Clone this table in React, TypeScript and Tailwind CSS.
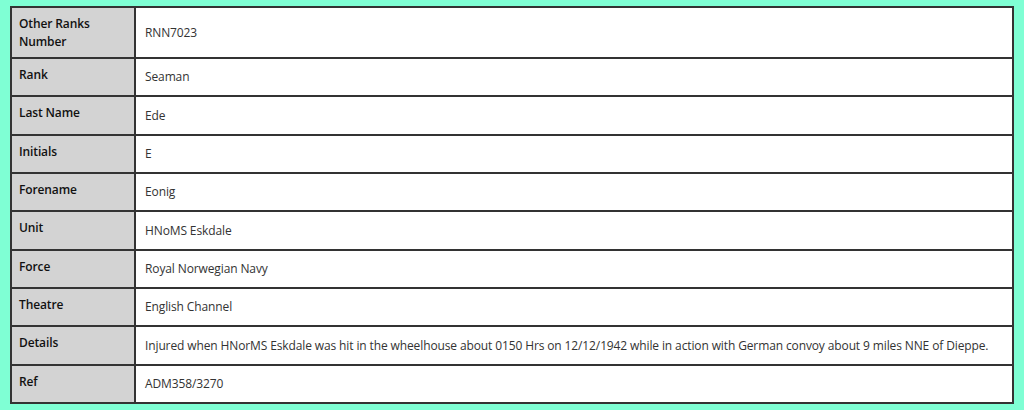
import React from "react";

const rows: [string, string, string][] = [
  ["Other Ranks Number", "RNN7023", "h-[51px]"],
  ["Rank", "Seaman", "h-[38px]"],
  ["Last Name", "Ede", "h-[39px]"],
  ["Initials", "E", "h-[38px]"],
  ["Forename", "Eonig", "h-[38px]"],
  ["Unit", "HNoMS Eskdale", "h-[39px]"],
  ["Force", "Royal Norwegian Navy", "h-[38px]"],
  ["Theatre", "English Channel", "h-[38px]"],
  [
    "Details",
    "Injured when HNorMS Eskdale was hit in the wheelhouse about 0150 Hrs on 12/12/1942 while in action with German convoy about 9 miles NNE of Dieppe.",
    "h-[39px]",
  ],
  ["Ref", "ADM358/3270", "h-[38px]"],
];

export default function App() {
  return (
    <div
      className="w-[1024px] h-[410px] bg-[#7fffd4] px-[10px] pt-[6px]"
      style={{ fontFamily: '"Open Sans", "Noto Sans", sans-serif' }}
    >
      <table className="w-[1004px] border-collapse border-2 border-[#333] text-[12px] leading-[18px] tracking-[-0.12px]">
        <tbody>
          {rows.map(([k, v, h]) => (
            <tr key={k} className={h}>
              <td className="w-[124px] border-2 border-[#333] bg-[#d3d3d3] pl-[7px] pr-[6px] pt-[7px] pb-[5px] align-top font-semibold text-[#111]">
                {k}
              </td>
              <td className="border-2 border-[#333] bg-white pl-[9px] pr-[6px] py-[8px] align-middle text-[#333]">
                {v}
              </td>
            </tr>
          ))}
        </tbody>
      </table>
    </div>
  );
}
